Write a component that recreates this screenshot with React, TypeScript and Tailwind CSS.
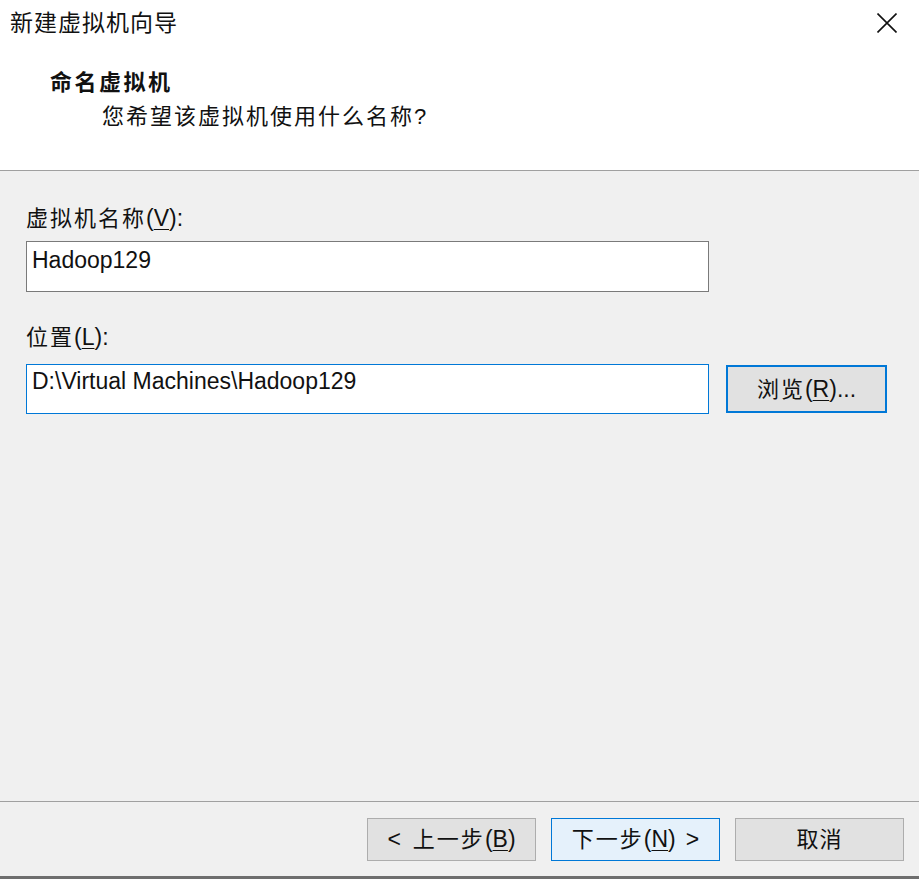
import React from "react";

const font = { fontFamily: '"Liberation Sans", "Noto Sans CJK SC", sans-serif' };

// mnemonic label like 虚拟机名称(V):
function Mnemonic({ cjk, letter, tail = "" }: { cjk: string; letter: string; tail?: string }) {
  return (
    <span className="whitespace-nowrap">
      <span className="tracking-[2px]">{cjk}</span>
      <span className="text-[23px]">
        (<span className="underline underline-offset-[3px] decoration-1">{letter}</span>){tail}
      </span>
    </span>
  );
}

function FooterButton({
  children,
  primary,
}: {
  children: React.ReactNode;
  primary?: boolean;
}) {
  return (
    <div
      className={
        "w-[169px] h-[43px] flex items-center justify-center text-[22px] leading-none text-[#111] border " +
        (primary ? "bg-[#e5f1fb] border-[#0078d7]" : "bg-[#e1e1e1] border-[#adadad]")
      }
    >
      {children}
    </div>
  );
}

export default function App() {
  return (
    <div className="w-[919px] h-[879px] flex flex-col bg-[#f0f0f0] text-[#111]" style={font}>
      {/* header */}
      <div className="h-[171px] bg-white border-b border-[#a0a0a0] flex flex-col">
        <div className="h-[46px] flex items-center justify-between pl-[10px] pr-[22px]">
          <span className="text-[23px] leading-none tracking-[1px]">新建虚拟机向导</span>
          <svg width="20" height="20" viewBox="0 0 20 20">
            <path d="M0.5 0.5 L19.5 19.5 M19.5 0.5 L0.5 19.5" stroke="#111" strokeWidth="1.6" fill="none" />
          </svg>
        </div>
        <div className="h-[30px] mt-[22px] pl-[50px] flex items-center text-[22px] font-bold tracking-[2.5px] leading-none">
          命名虚拟机
        </div>
        <div className="h-[30px] mt-[4px] pl-[102px] flex items-center text-[22px] leading-none">
          <span className="tracking-[2px]">您希望该虚拟机使用什么名称</span>?
        </div>
      </div>

      {/* body */}
      <div className="flex-1 flex flex-col pl-[26px]">
        <div className="h-[30px] mt-[32px] flex items-center text-[22px] leading-none">
          <Mnemonic cjk="虚拟机名称" letter="V" tail=":" />
        </div>
        <div className="w-[683px] h-[51px] mt-[8px] bg-white border border-[#7a7a7a] px-[5px] pt-[4px] text-[23px] leading-[28px]">
          Hadoop129
        </div>
        <div className="h-[30px] mt-[30px] flex items-center text-[22px] leading-none">
          <Mnemonic cjk="位置" letter="L" tail=":" />
        </div>
        <div className="mt-[12px] flex items-start gap-[17px]">
          <div className="w-[683px] h-[50px] bg-white border border-[#0078d7] px-[5px] pt-[2px] text-[23px] leading-[28px] whitespace-nowrap">
            D:\Virtual Machines\Hadoop129
          </div>
          <div className="w-[161px] h-[48px] mt-[1px] bg-[#e1e1e1] border-2 border-[#0078d7] flex items-center justify-center text-[22px] leading-none">
            <Mnemonic cjk="浏览" letter="R" tail="..." />
          </div>
        </div>
      </div>

      {/* footer */}
      <div className="h-[75px] border-t border-[#a0a0a0] flex justify-end gap-[15px] pr-[15px] pt-[16px]">
        <FooterButton>
          <span className="text-[23px]">&lt;</span>
          <span className="ml-[12px]">
            <Mnemonic cjk="上一步" letter="B" />
          </span>
        </FooterButton>
        <FooterButton primary>
          <Mnemonic cjk="下一步" letter="N" />
          <span className="ml-[10px] text-[23px]">&gt;</span>
        </FooterButton>
        <FooterButton>
          <span className="tracking-[1px]">取消</span>
        </FooterButton>
      </div>
      <div className="h-[3px] bg-[#6e6e6e]" />
    </div>
  );
}
